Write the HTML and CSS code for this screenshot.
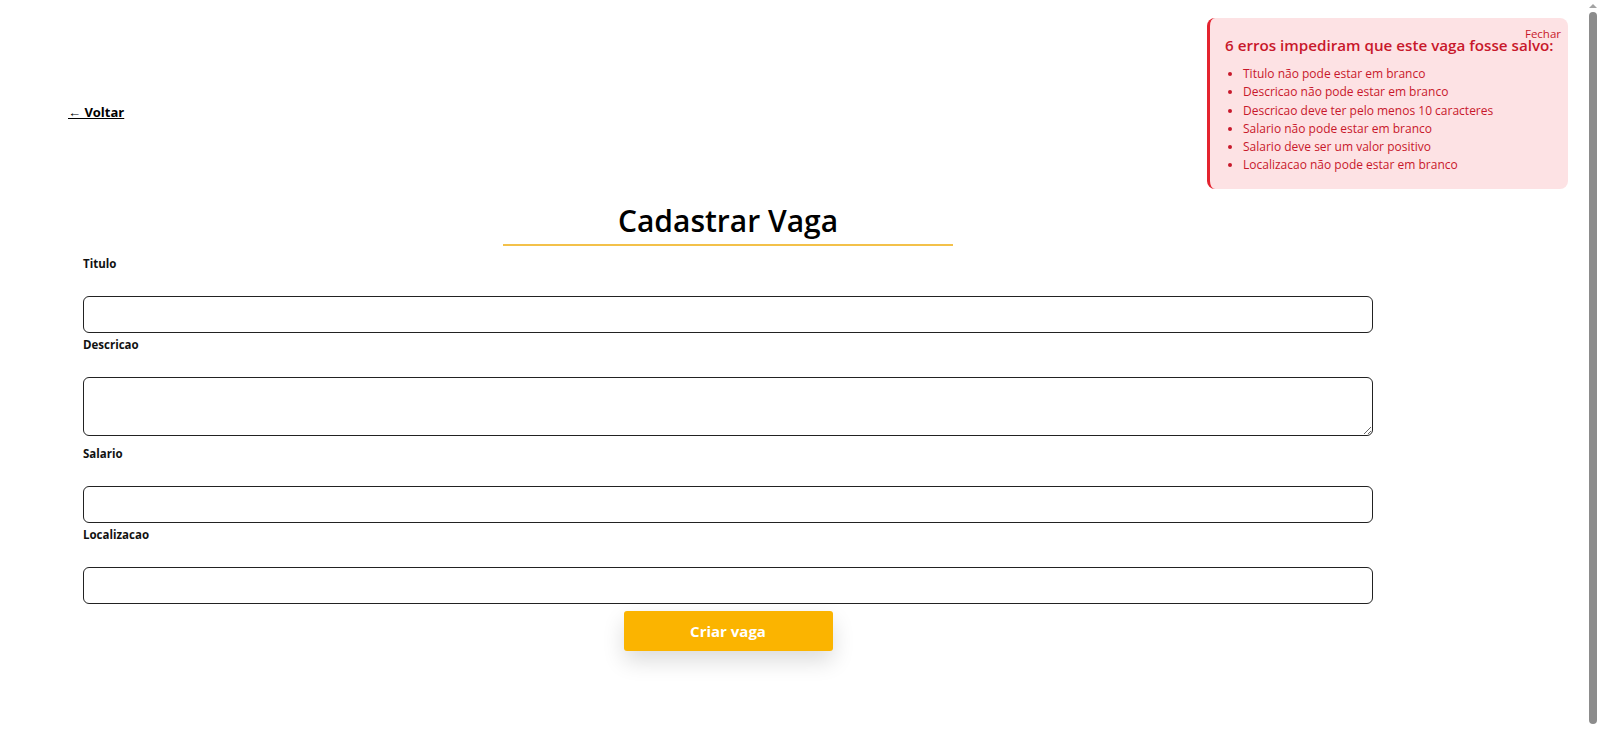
FILE: index.html
```html
<!DOCTYPE html>
<html lang="pt-BR">
<head>
<meta charset="utf-8">
<title>Cadastrar Vaga</title>
<link rel="stylesheet" href="styles.css">
</head>
<body>
<div class="page">
  <main class="main">
    <a class="back" href="#">&larr; Voltar</a>
    <div class="content">
      <h1 class="title">Cadastrar Vaga</h1>
      <form class="form">
        <label class="label" for="titulo">Titulo</label>
        <input class="field" id="titulo" type="text">
        <label class="label" for="descricao">Descricao</label>
        <textarea class="field area" id="descricao"></textarea>
        <label class="label" for="salario">Salario</label>
        <input class="field" id="salario" type="text">
        <label class="label" for="localizacao">Localizacao</label>
        <input class="field" id="localizacao" type="text">
        <div class="actions">
          <button class="submit" type="button">Criar vaga</button>
        </div>
      </form>
    </div>
  </main>
  <div class="scrollbar">
    <div class="arrow"></div>
    <div class="thumb"></div>
  </div>
</div>
<div class="errors">
  <a class="close" href="#">Fechar</a>
  <h2 class="errors-title">6 erros impediram que este vaga fosse salvo:</h2>
  <ul class="errors-list">
    <li>Titulo não pode estar em branco</li>
    <li>Descricao não pode estar em branco</li>
    <li>Descricao deve ter pelo menos 10 caracteres</li>
    <li>Salario não pode estar em branco</li>
    <li>Salario deve ser um valor positivo</li>
    <li>Localizacao não pode estar em branco</li>
  </ul>
</div>
</body>
</html>
```
FILE: styles.css
```css
html, body {
  margin: 0;
  padding: 0;
  height: 100%;
  overflow: hidden;
  background: #fff;
}
body {
  font-family: "Open Sans", "Noto Sans", sans-serif;
  color: #111;
}
.page {
  display: flex;
  height: 731px;
}
.main {
  flex: 1;
  padding: 102px 0 0 68px;
  display: flex;
  flex-direction: column;
  align-items: flex-start;
}
.back {
  font-size: 13px;
  font-weight: 700;
  color: #000;
  text-decoration: underline;
  line-height: 20px;
}
.content {
  margin: 79px 0 0 15px;
  width: 1290px;
}
.title {
  width: 450px;
  margin: 0 auto;
  text-align: center;
  font-size: 30px;
  font-weight: 600;
  line-height: 40px;
  color: #000;
  border-bottom: 2px solid #f3c14a;
  padding-bottom: 3px;
}
.form {
  display: flex;
  flex-direction: column;
  margin-top: 10px;
}
.label {
  font-size: 11.5px;
  font-weight: 700;
  line-height: 16px;
  margin-bottom: 24px;
  color: #111;
}
.field {
  box-sizing: border-box;
  height: 37px;
  border: 1px solid #222;
  border-radius: 6px;
  margin: 0 0 4px;
  font: inherit;
  background: #fff;
}
.area {
  height: 59px;
  margin-bottom: 10px;
}
.actions {
  display: flex;
  justify-content: center;
  margin-top: 3px;
}
.submit {
  width: 209px;
  height: 40px;
  border: 0;
  border-radius: 3px;
  background: #fbb400;
  color: #fff;
  font-family: inherit;
  font-size: 15px;
  font-weight: 700;
  box-shadow: 0 10px 22px rgba(0, 0, 0, 0.14);
}
.scrollbar {
  width: 15px;
  display: flex;
  flex-direction: column;
  align-items: center;
  background: #fff;
}
.arrow {
  margin-top: 4px;
  width: 0;
  height: 0;
  border-left: 4px solid transparent;
  border-right: 4px solid transparent;
  border-bottom: 4px solid #a3a3a3;
}
.thumb {
  margin-top: 4px;
  width: 8px;
  height: 712px;
  border-radius: 4px;
  background: #8c8c8c;
}
.errors {
  position: fixed;
  top: 18px;
  left: 1207px;
  width: 361px;
  height: 171px;
  box-sizing: border-box;
  background: #fde2e4;
  border-left: 3px solid #e3232f;
  border-radius: 8px;
  padding: 17px 12px 0 15px;
  color: #c8182b;
}
.close {
  position: absolute;
  top: 8px;
  right: 7px;
  font-size: 11.5px;
  color: #c8182b;
  text-decoration: none;
}
.errors-title {
  margin: 0;
  font-size: 15.2px;
  font-weight: 600;
  line-height: 20px;
}
.errors-list {
  margin: 10px 0 0;
  padding-left: 18px;
  font-size: 12px;
  line-height: 18.3px;
}
```
